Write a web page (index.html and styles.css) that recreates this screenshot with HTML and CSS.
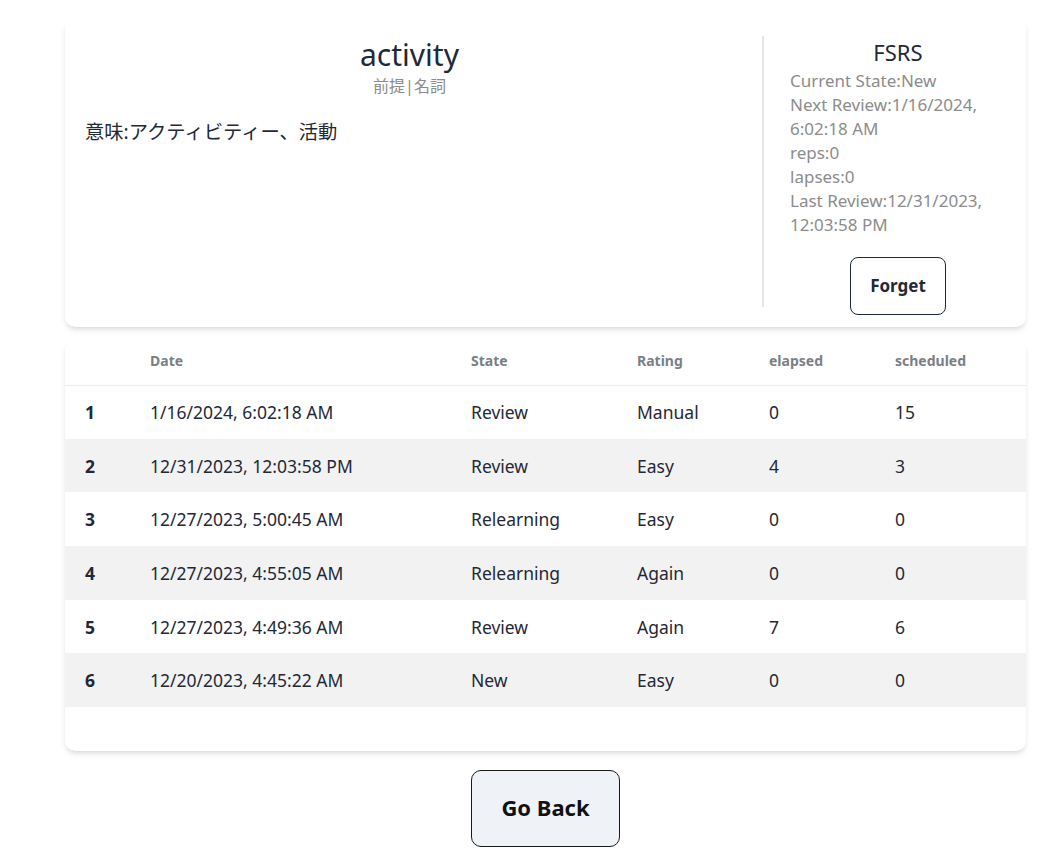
FILE: index.html
```html
<!DOCTYPE html>
<html lang="ja">
<head>
<meta charset="utf-8">
<title>activity</title>
<link rel="stylesheet" href="styles.css">
</head>
<body>
<main class="page">
  <section class="card word-card">
    <div class="word-main">
      <h1 class="word-title">activity</h1>
      <div class="word-sub">前提|名詞</div>
      <p class="word-meaning">意味:アクティビティー、活動</p>
    </div>
    <div class="divider"></div>
    <div class="fsrs">
      <h2 class="fsrs-title">FSRS</h2>
      <div class="fsrs-info">
        <div>Current State:New</div>
        <div>Next Review:1/16/2024,<br>6:02:18 AM</div>
        <div>reps:0</div>
        <div>lapses:0</div>
        <div>Last Review:12/31/2023,<br>12:03:58 PM</div>
      </div>
      <button class="btn-forget" type="button">Forget</button>
    </div>
  </section>

  <section class="card log-card">
    <table class="log-table">
      <colgroup>
        <col class="c-no"><col class="c-date"><col class="c-state"><col class="c-rating"><col class="c-elapsed"><col class="c-sched">
      </colgroup>
      <thead>
        <tr><th></th><th>Date</th><th>State</th><th>Rating</th><th>elapsed</th><th>scheduled</th></tr>
      </thead>
      <tbody>
        <tr><th>1</th><td>1/16/2024, 6:02:18 AM</td><td>Review</td><td>Manual</td><td>0</td><td>15</td></tr>
        <tr><th>2</th><td>12/31/2023, 12:03:58 PM</td><td>Review</td><td>Easy</td><td>4</td><td>3</td></tr>
        <tr><th>3</th><td>12/27/2023, 5:00:45 AM</td><td>Relearning</td><td>Easy</td><td>0</td><td>0</td></tr>
        <tr><th>4</th><td>12/27/2023, 4:55:05 AM</td><td>Relearning</td><td>Again</td><td>0</td><td>0</td></tr>
        <tr><th>5</th><td>12/27/2023, 4:49:36 AM</td><td>Review</td><td>Again</td><td>7</td><td>6</td></tr>
        <tr><th>6</th><td>12/20/2023, 4:45:22 AM</td><td>New</td><td>Easy</td><td>0</td><td>0</td></tr>
      </tbody>
    </table>
  </section>

  <div class="actions">
    <button class="btn-back" type="button">Go Back</button>
  </div>
</main>
</body>
</html>
```
FILE: styles.css
```css
* { box-sizing: border-box; }
html, body { margin: 0; padding: 0; background: #ffffff; }
body {
  font-family: "Noto Sans", "Noto Sans CJK JP", sans-serif;
  color: #1f2937;
  font-size: 16px;
}
.page {
  width: 961px;
  margin-left: 65px;
  padding-top: 18px;
  display: flex;
  flex-direction: column;
}
.card {
  background: #fff;
  border-radius: 10px;
  box-shadow: 0 4px 6px -1px rgba(0,0,0,0.10), 0 2px 4px -2px rgba(0,0,0,0.10);
}
.word-card {
  display: flex;
  padding: 18px 20px 12px 20px;
}
.word-main { flex: 1; min-width: 0; }
.word-title {
  margin: 0;
  text-align: center;
  font-weight: 400;
  font-size: 30px;
  line-height: 38px;
  color: #1f2937;
}
.word-sub {
  text-align: center;
  font-size: 16px;
  line-height: 24px;
  color: #8c8c8c;
}
.word-meaning {
  margin: 20px 0 0 0;
  font-size: 19.3px;
  line-height: 28px;
}
.divider {
  width: 2px;
  background: #e6e6e6;
  margin: 0 26px 8px 28px;
  align-self: stretch;
}
.fsrs {
  width: 216px;
  display: flex;
  flex-direction: column;
}
.fsrs-title {
  margin: 0;
  text-align: center;
  font-weight: 400;
  font-size: 22px;
  line-height: 33px;
}
.fsrs-info {
  color: #8c8c8c;
  font-size: 17px;
  line-height: 24px;
}
.btn-forget {
  align-self: center;
  margin-top: 20px;
  width: 96px;
  height: 58px;
  padding-bottom: 2px;
  border: 1px solid #1f2937;
  border-radius: 8px;
  background: #fff;
  font-family: inherit;
  font-size: 17px;
  font-weight: 700;
  color: #1f2937;
}
.log-card {
  margin-top: 13px;
  padding-bottom: 44px;
  overflow: hidden;
}
.log-table {
  width: 100%;
  border-collapse: collapse;
  table-layout: fixed;
}
.c-no { width: 65px; }
.c-date { width: 321px; }
.c-state { width: 166px; }
.c-rating { width: 132px; }
.c-elapsed { width: 126px; }
.c-sched { width: 151px; }
.log-table th, .log-table td {
  text-align: left;
  padding: 0 0 0 20px;
  white-space: nowrap;
}
.log-table thead th {
  height: 45px;
  padding-bottom: 3px;
  font-size: 14px;
  font-weight: 700;
  color: #7a7f87;
  border-bottom: 1px solid #ececec;
}
.log-table tbody tr { height: 53.7px; }
.log-table tbody tr:nth-child(even) { background: #f2f2f2; }
.log-table tbody th { font-weight: 700; font-size: 17.5px; }
.log-table tbody td { font-size: 17.5px; font-weight: 400; }
.actions {
  display: flex;
  justify-content: center;
  margin-top: 19px;
}
.btn-back {
  width: 149px;
  height: 77px;
  padding-bottom: 4px;
  border: 1px solid #1a1a1a;
  border-radius: 10px;
  background: #eff3f8;
  font-family: inherit;
  font-size: 22px;
  font-weight: 700;
  color: #111;
}
```
